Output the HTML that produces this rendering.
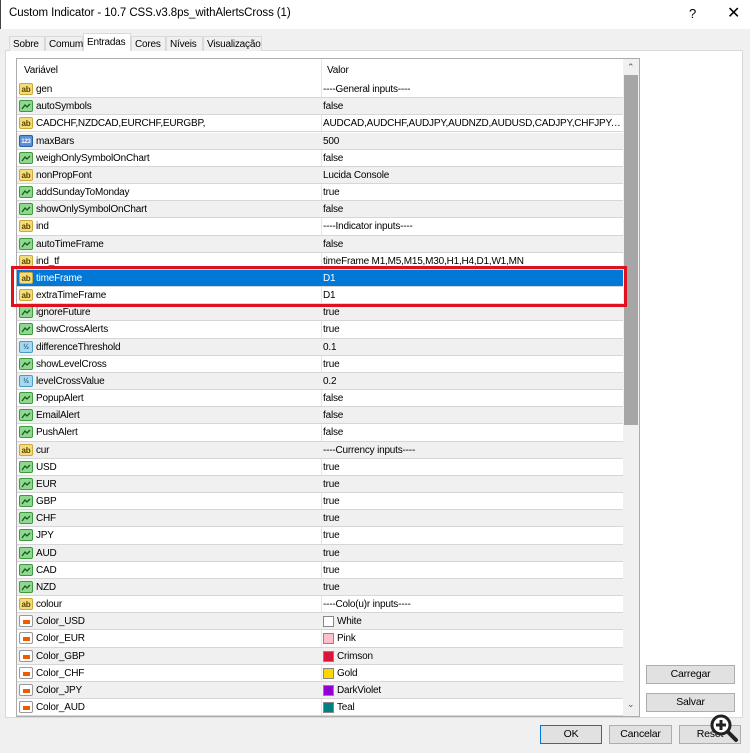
<!DOCTYPE html>
<html><head><meta charset="utf-8"><style>
*{box-sizing:border-box;margin:0;padding:0}
body{width:750px;height:753px;background:#f0f0f0;font-family:"Liberation Sans",sans-serif;font-size:10px;color:#000;position:relative;overflow:hidden;letter-spacing:-0.2px}
.title{position:absolute;left:0;top:0;width:750px;height:29px;background:#fff;border-left:1px solid #444}
.title span{position:absolute;left:8px;top:7px;font-size:11.5px;letter-spacing:-0.1px}
.q{position:absolute;left:688px;top:6px;font-size:13px}
.x{position:absolute;left:726px;top:3px;font-size:16px}
.tab{position:absolute;top:36px;height:15px;border:1px solid #d9d9d9;border-bottom:none;background:#f0f0f0;padding:2px 0 0 3px}
.tab.sel{top:33px;height:18px;background:#fff;z-index:2}
.panel{position:absolute;left:5px;top:50px;width:738px;height:668px;background:#fff;border:1px solid #d9d9d9}
.list{position:absolute;left:16px;top:58px;width:624px;height:659px;border:1px solid #acacac;background:#fff;overflow:hidden}
.hdr{position:absolute;left:0;top:0;width:606px;height:22px;background:#fff}
.hdr span{position:absolute;top:6px}
.row{position:absolute;left:0;width:606px;height:17.17px;border-bottom:1px solid #d6d6d6}
.row.g{background:#f0f0f0}
.row.s{background:#0078d7;color:#fff}
.row .n{position:absolute;left:19px;top:3px}
.row .v{position:absolute;left:306px;top:3px;width:298px;white-space:nowrap;overflow:hidden;text-overflow:ellipsis}
.div{position:absolute;left:304px;top:0;width:1px;height:659px;background:#e5e5e5}
.ic{position:absolute;left:2px;top:2px;width:14px;height:12px;border-radius:2px;font-size:8px;line-height:12px;text-align:center;font-weight:bold}
.ab{background:#f3dc7a;border:1px solid #c8a93a;color:#5a4500}
.bo{background:#8fd88f;border:1px solid #3d9b3d}
.nm{background:#5b8fd6;border:1px solid #2b5fa6;color:#fff;font-size:6px}
.dv{background:#a6d8f0;border:1px solid #4a9cc8;color:#24608a;font-size:7px}
.co{background:#fff;border:1px solid #999}
.co:after{content:"";position:absolute;left:3px;top:4px;width:7px;height:4px;background:#f25a00}
.sw{position:absolute;left:306px;top:3px;width:11px;height:11px;border:1px solid #888}
.sb{position:absolute;left:606px;top:0;width:16px;height:657px;background:#f0f0f0}
.thumb{position:absolute;left:1px;top:16px;width:14px;height:350px;background:#a6a6a6}
.red{position:absolute;left:11px;top:266px;width:616px;height:41px;border:3px solid #e0101d;z-index:5}
.btn{position:absolute;height:19px;background:#e1e1e1;border:1px solid #adadad;text-align:center;line-height:17px;font-size:10.5px}
</style></head><body>
<div class="title"><span>Custom Indicator - 10.7 CSS.v3.8ps_withAlertsCross (1)</span><div class="q">?</div><div class="x">✕</div></div>
<div class="panel"></div>
<div class="tab" style="left:9px;width:36px">Sobre</div>
<div class="tab" style="left:45px;width:38px">Comum</div>
<div class="tab sel" style="left:83px;width:48px;padding-top:3px">Entradas</div>
<div class="tab" style="left:131px;width:35px">Cores</div>
<div class="tab" style="left:166px;width:37px">Níveis</div>
<div class="tab" style="left:203px;width:59px">Visualização</div>
<div class="list" id="L">
<div class="hdr"><span style="left:7px">Variável</span><span style="left:310px">Valor</span></div>
<div class="div"></div>
<div class="sb"><div style="position:absolute;left:4px;top:3px;font-size:9px;color:#555">⌃</div><div class="thumb"></div><div style="position:absolute;left:4px;top:640px;font-size:9px;color:#555">⌄</div></div>
</div>
<div class="red"></div>
<div class="btn" style="left:646px;top:665px;width:89px">Carregar</div>
<div class="btn" style="left:646px;top:693px;width:89px">Salvar</div>
<div class="btn" style="left:540px;top:725px;width:62px;border:1px solid #0078d7">OK</div>
<div class="btn" style="left:609px;top:725px;width:63px">Cancelar</div>
<div class="btn" style="left:679px;top:725px;width:62px">Reset</div>
<svg style="position:absolute;left:708px;top:712px" width="32" height="32"><circle cx="13" cy="13" r="9" fill="#fff" stroke="#222" stroke-width="3"/><path d="M8 13h10M13 8v10" stroke="#222" stroke-width="3"/><path d="M20 20l8 8" stroke="#222" stroke-width="4" stroke-linecap="round"/></svg>
<script>
var R=[["ab","gen","----General inputs----"],["bo","autoSymbols","false"],["ab","CADCHF,NZDCAD,EURCHF,EURGBP,","AUDCAD,AUDCHF,AUDJPY,AUDNZD,AUDUSD,CADJPY,CHFJPY,EURAUD"],["nm","maxBars","500"],["bo","weighOnlySymbolOnChart","false"],["ab","nonPropFont","Lucida Console"],["bo","addSundayToMonday","true"],["bo","showOnlySymbolOnChart","false"],["ab","ind","----Indicator inputs----"],["bo","autoTimeFrame","false"],["ab","ind_tf","timeFrame M1,M5,M15,M30,H1,H4,D1,W1,MN"],["ab","timeFrame","D1"],["ab","extraTimeFrame","D1"],["bo","ignoreFuture","true"],["bo","showCrossAlerts","true"],["dv","differenceThreshold","0.1"],["bo","showLevelCross","true"],["dv","levelCrossValue","0.2"],["bo","PopupAlert","false"],["bo","EmailAlert","false"],["bo","PushAlert","false"],["ab","cur","----Currency inputs----"],["bo","USD","true"],["bo","EUR","true"],["bo","GBP","true"],["bo","CHF","true"],["bo","JPY","true"],["bo","AUD","true"],["bo","CAD","true"],["bo","NZD","true"],["ab","colour","----Colo(u)r inputs----"],["co","Color_USD","White","#fff"],["co","Color_EUR","Pink","#ffc0cb"],["co","Color_GBP","Crimson","#dc143c"],["co","Color_CHF","Gold","#ffd700"],["co","Color_JPY","DarkViolet","#9400d3"],["co","Color_AUD","Teal","#008080"]];
var T={ab:"ab",bo:"",nm:"123",dv:"½",co:""};
var h="";R.forEach(function(r,i){var c=i==11?"s":(i%2?"g":"");
h+='<div class="row '+c+'" style="top:'+(22+i*17.17)+'px"><div class="ic '+r[0]+'">'+T[r[0]]+(r[0]=="bo"?'<svg width="12" height="10" style="position:absolute;left:0;top:0"><path d="M2 8l3-4 2 2 3-3" stroke="#1a5a1a" fill="none" stroke-width="1.3"/></svg>':'')+'</div><span class="n">'+r[1]+'</span>'+(r[3]?'<span class="sw" style="background:'+r[3]+'"></span><span class="v" style="left:320px">'+r[2]+'</span>':'<span class="v">'+r[2]+'</span>')+'</div>';});
document.getElementById("L").insertAdjacentHTML("beforeend",h);
var s=document.querySelector(".sb");document.getElementById("L").appendChild(s);
</script>
</body></html>
